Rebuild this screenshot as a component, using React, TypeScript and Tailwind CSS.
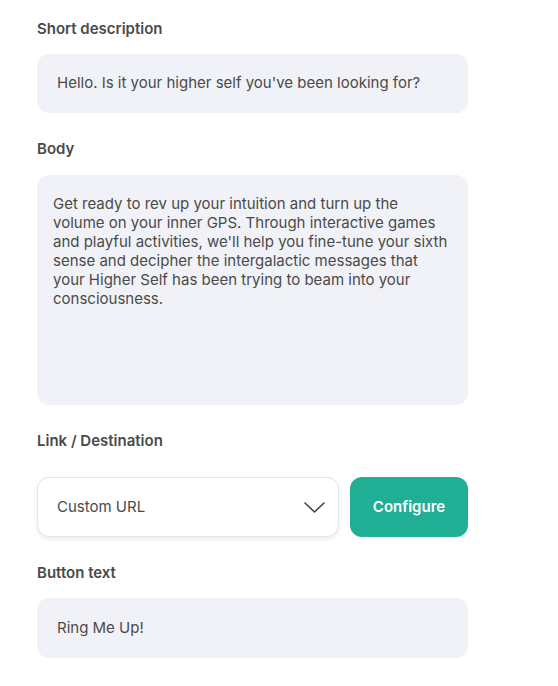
import React from "react";

const font = { fontFamily: "Inter, 'Open Sans', sans-serif" };

function Label({ children }: { children: React.ReactNode }) {
  return (
    <div className="text-[15px] leading-[20px] font-semibold text-[#4a4a4a]">{children}</div>
  );
}

export default function App() {
  return (
    <div className="min-h-[686px] w-[558px] bg-white pl-[37px] pt-[19px]" style={font}>
      <div className="flex w-[431px] flex-col">
        <Label>Short description</Label>
        <div className="mt-[15px] flex h-[59px] items-center rounded-[12px] bg-[#f1f2f7] px-[20px] text-[15px] text-[#4a4a4a]">
          Hello. Is it your higher self you've been looking for?
        </div>

        <div className="mt-[26px]">
          <Label>Body</Label>
        </div>
        <div className="mt-[16px] h-[230px] rounded-[12px] bg-[#f1f2f7] pl-[16px] pr-[16px] pt-[19px] text-[15px] leading-[19px] text-[#4a4a4a]">
          Get ready to rev up your intuition and turn up the volume on your inner GPS. Through interactive games and playful activities, we'll help you fine-tune your sixth sense and decipher the intergalactic messages that your Higher Self has been trying to beam into your consciousness.
        </div>

        <div className="mt-[26px]">
          <Label>Link / Destination</Label>
        </div>
        <div className="mt-[26px] flex gap-[11px]">
          <div className="flex h-[60px] w-[302px] items-center justify-between rounded-[12px] border border-[#e3e5ee] bg-white pl-[19px] pr-[13px] text-[15px] text-[#4a4a4a] shadow-[0_2px_4px_rgba(0,0,0,0.08)]">
            <span>Custom URL</span>
            <svg width="21" height="11" viewBox="0 0 21 11" fill="none">
              <path d="M1 1l9.5 9 9.5-9" stroke="#444" strokeWidth="1.6" strokeLinecap="round" strokeLinejoin="round" />
            </svg>
          </div>
          <div className="flex h-[60px] w-[118px] items-center justify-center rounded-[12px] bg-[#20ae95] text-[15px] font-semibold text-white">
            Configure
          </div>
        </div>

        <div className="mt-[26px]">
          <Label>Button text</Label>
        </div>
        <div className="mt-[15px] flex h-[60px] items-center rounded-[12px] bg-[#f1f2f7] px-[20px] text-[15px] text-[#4a4a4a]">
          Ring Me Up!
        </div>
      </div>
    </div>
  );
}
